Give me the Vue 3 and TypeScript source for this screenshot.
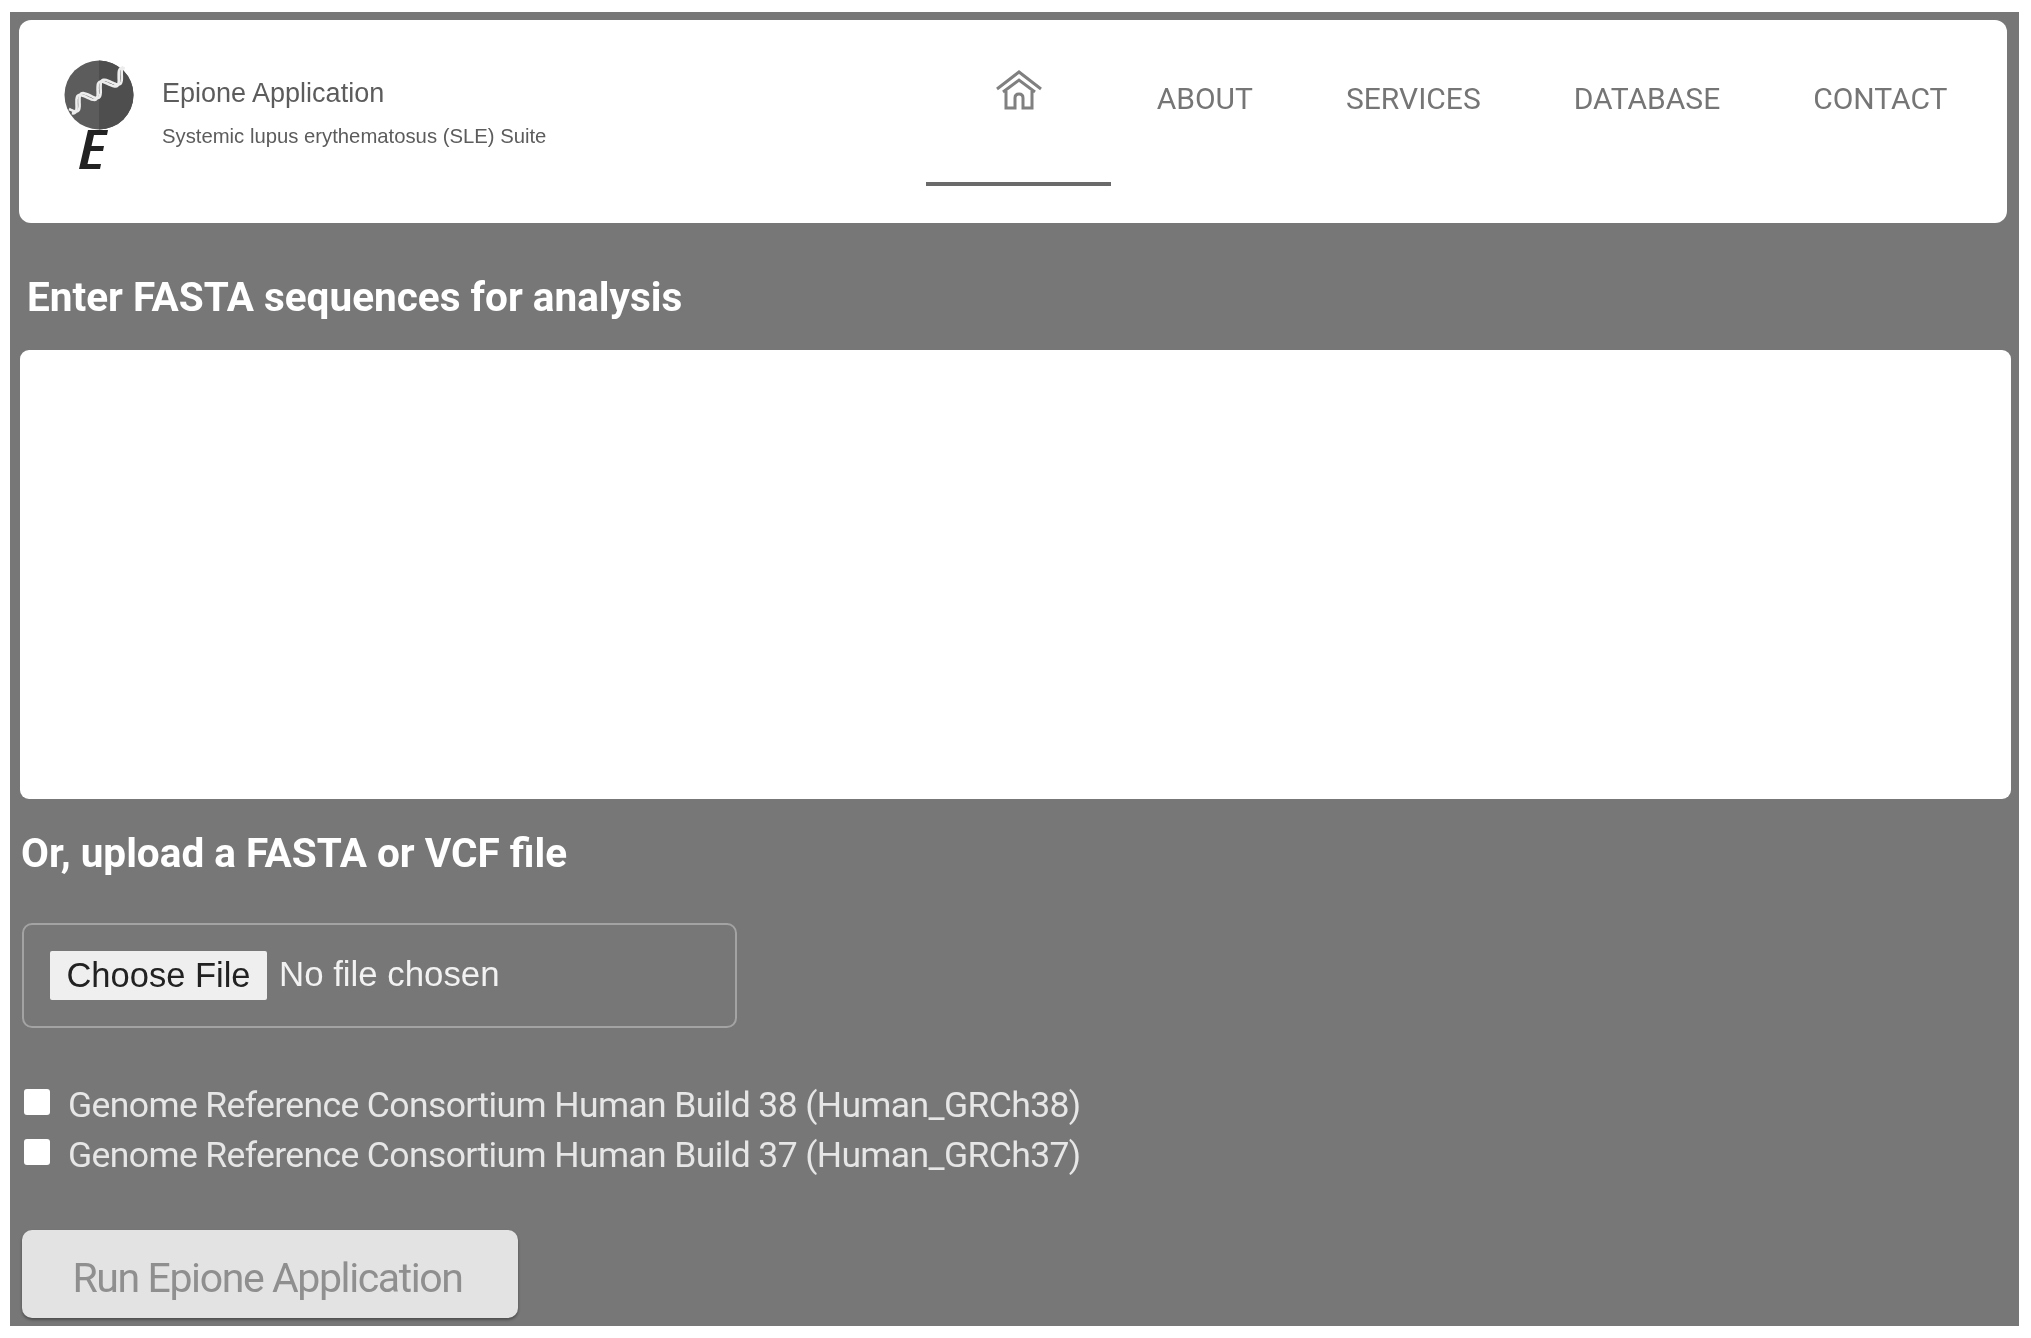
<script setup lang="ts">
const navItems: string[] = ['ABOUT', 'SERVICES', 'DATABASE', 'CONTACT']
const builds: string[] = [
  'Genome Reference Consortium Human Build 38 (Human_GRCh38)',
  'Genome Reference Consortium Human Build 37 (Human_GRCh37)',
]

function strand(phase: number): string {
  const points: string[] = []
  for (let i = 0; i <= 60; i++) {
    const t = i / 60
    const offset = 6.5 * Math.sin(2 * Math.PI * 2.75 * t + phase)
    const x = 5 + 58 * t + 0.55 * offset
    const y = 49 - 37 * t + 0.83 * offset
    points.push(`${x.toFixed(1)} ${y.toFixed(1)}`)
  }
  return `M${points.join(' L')}`
}
const strands: string[] = [strand(0), strand(0.9)]
</script>

<template>
  <div class="page">
    <header class="header">
      <div class="brand">
        <svg class="logo" viewBox="0 0 70 110" width="70" height="110" aria-hidden="true">
          <circle cx="35" cy="35" r="34.5" fill="#5c5c5c" />
          <path d="M35 .5a34.500 34.500 0 0 1 0 69z" fill="#4e4e4e" />
          <path v-for="(d, i) in strands" :key="i" :d="d" fill="none" stroke="#ececec" stroke-width="2.6" />
          <path d="M24 70 H44 L43 75 H30 L27.500 86 H40 L39 91 H26.500 L23.500 104 H37 L36 109 H15 Z" fill="#222" />
        </svg>
        <div class="brand-text">
          <div class="brand-title">Epione Application</div>
          <div class="brand-sub">Systemic lupus erythematosus (SLE) Suite</div>
        </div>
      </div>
      <nav class="nav">
        <a class="nav-item home" aria-label="Home">
          <svg viewBox="0 0 46 40" width="46" height="40" fill="none" stroke="#808080" stroke-width="3" aria-hidden="true">
            <path d="M1 19 L23 2 L45 19" />
            <path d="M7 22 L23 10 L39 22" />
            <path d="M10 21 V38 H19 V28 Q19 24 23 24 Q27 24 27 28 V38 H36 V21" />
          </svg>
        </a>
        <a v-for="item in navItems" :key="item" class="nav-item">{{ item }}</a>
      </nav>
    </header>

    <h2 class="heading first">Enter FASTA sequences for analysis</h2>
    <textarea class="fasta" aria-label="FASTA sequences"></textarea>

    <h2 class="heading second">Or, upload a FASTA or VCF file</h2>
    <div class="file-box">
      <button class="choose" type="button">Choose File</button>
      <span class="file-name">No file chosen</span>
    </div>

    <div class="builds">
      <label v-for="b in builds" :key="b" class="build">
        <span class="check"></span>
        <span class="build-text">{{ b }}</span>
      </label>
    </div>

    <button class="run" type="button">Run Epione Application</button>
  </div>
</template>

<style>
html, body { background: #fff; }
</style>

<style scoped>
.page {
  box-sizing: border-box;
  width: 2009px;
  height: 1314px;
  margin: 12px 0 0 10px;
  padding: 8px 0 0 9px;
  background: #777;
  font-family: Roboto, "Liberation Sans", sans-serif;
  overflow: hidden;
  filter: blur(0.7px);
}
.header {
  box-sizing: border-box;
  width: 1988px;
  height: 203px;
  background: #fff;
  border-radius: 12px;
  display: flex;
  justify-content: space-between;
  padding: 0 13px 0 45px;
}
.brand { display: flex; align-items: flex-start; padding-top: 40px; }
.logo { display: block; margin-right: 28px; }
.brand-text { padding-top: 17px; font-family: "Liberation Sans", sans-serif; color: #5c5c5c; }
.brand-title { font-size: 27px; line-height: 32px; }
.brand-sub { font-size: 20.300px; line-height: 24px; margin-top: 15px; }
.nav { display: flex; align-items: flex-start; }
.nav-item {
  box-sizing: border-box;
  height: 166px;
  padding: 59px 46.500px 0;
  font-size: 30px;
  line-height: 40px;
  color: #757575;
  white-space: nowrap;
}
.home {
  width: 185px;
  margin-right: -1px;
  padding: 50px 0 0;
  display: flex;
  justify-content: center;
  align-items: flex-start;
  border-bottom: 4px solid #6a6a6a;
}
.heading {
  margin: 0;
  color: #fff;
  font-weight: 700;
  font-size: 40.500px;
  line-height: 46px;
}
.first { margin: 51px 0 0 8px; }
.fasta {
  display: block;
  box-sizing: border-box;
  width: 1991px;
  height: 449px;
  margin: 30px 0 0 1px;
  padding: 0;
  border: 0;
  border-radius: 9px;
  background: #fff;
  resize: none;
  outline: none;
}
.second { margin: 31px 0 0 2px; }
.file-box {
  box-sizing: border-box;
  width: 715px;
  height: 105px;
  margin: 47px 0 0 3px;
  padding: 26px 0 0 26px;
  border: 2px solid #a3a3a3;
  border-radius: 10px;
  display: flex;
  align-items: flex-start;
}
.choose {
  box-sizing: border-box;
  width: 217px;
  height: 49px;
  padding: 0;
  border: 0;
  border-radius: 2px;
  background: #efefef;
  color: #222;
  font-family: "Liberation Sans", sans-serif;
  font-size: 34.500px;
}
.file-name {
  margin-left: 12px;
  color: #f2f2f2;
  font-family: "Liberation Sans", sans-serif;
  font-size: 34.800px;
  line-height: 46px;
}
.builds { margin: 56px 0 0 5px; display: flex; flex-direction: column; gap: 8px; }
.build { display: flex; align-items: flex-start; height: 42px; }
.check {
  width: 26px;
  height: 26px;
  margin-top: 5px;
  background: #fff;
  border-radius: 3px;
  flex: none;
}
.build-text {
  margin-left: 18px;
  color: #e6e6e6;
  font-size: 35.500px;
  line-height: 42px;
  letter-spacing: -0.62px;
  white-space: nowrap;
}
.run {
  display: block;
  box-sizing: border-box;
  width: 496px;
  height: 88px;
  margin: 54px 0 0 3px;
  padding: 7px 5px 0 0;
  border: 0;
  border-radius: 10px;
  background: #e3e3e3;
  color: #8f8f8f;
  font-family: Roboto, sans-serif;
  font-size: 41px;
  letter-spacing: -1.4px;
  box-shadow: 0 2px 3px rgba(0, 0, 0, 0.35);
}
</style>
